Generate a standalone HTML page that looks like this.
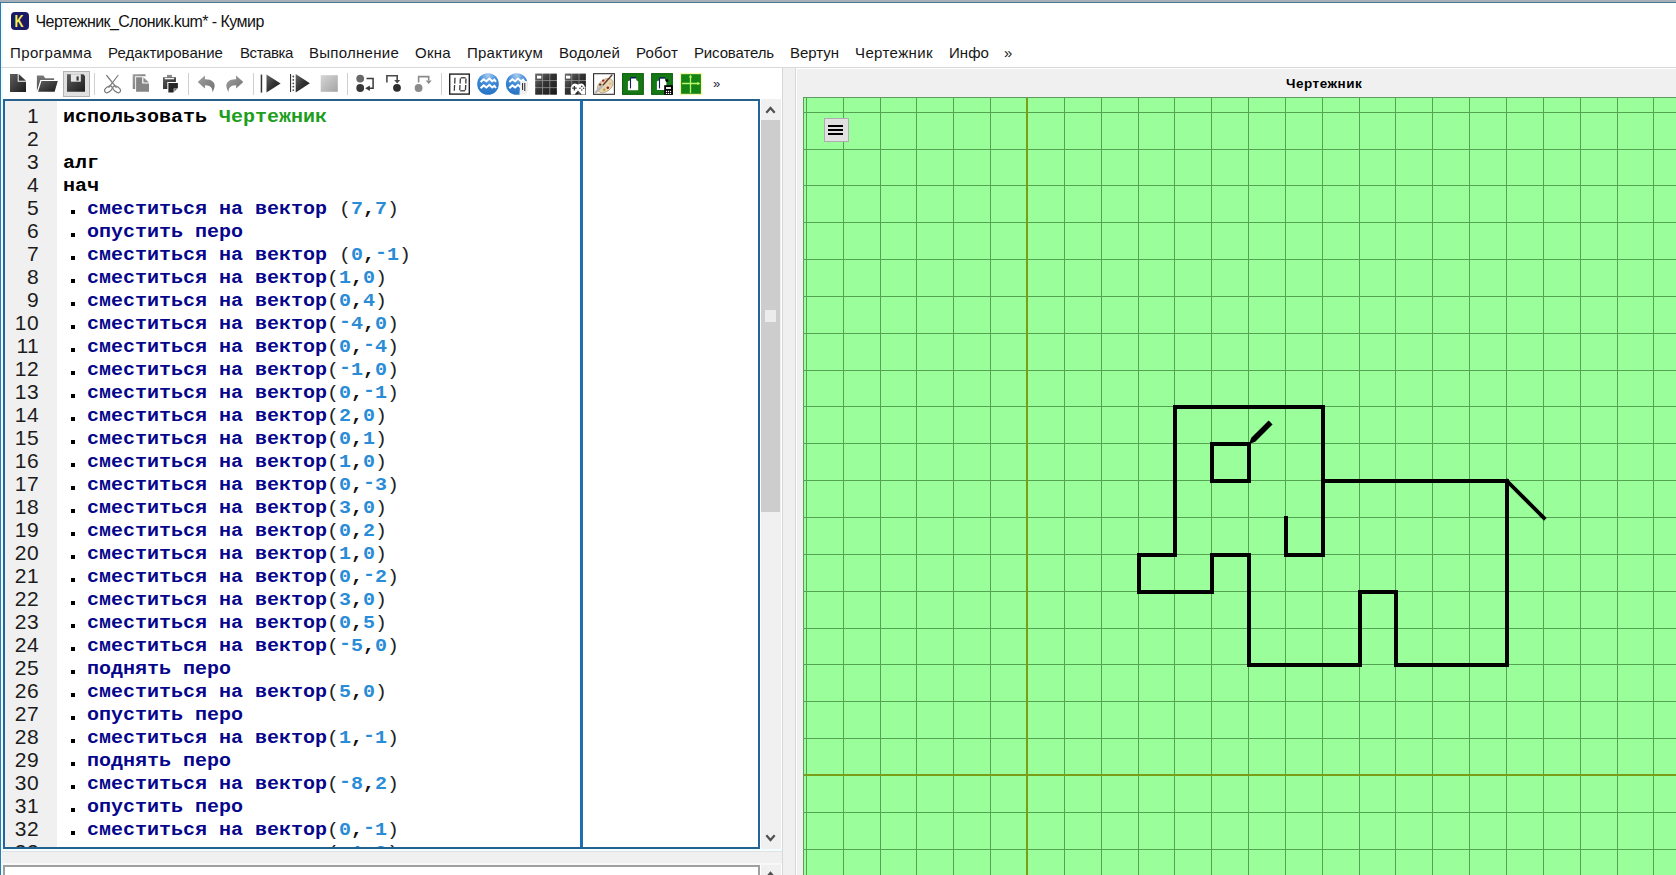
<!DOCTYPE html>
<html lang="ru">
<head>
<meta charset="utf-8">
<title>Чертежник_Слоник.kum* - Кумир</title>
<style>
*{box-sizing:border-box;margin:0;padding:0}
html,body{width:1676px;height:875px;overflow:hidden;background:#fff}
body{position:relative;font-family:"Liberation Sans",sans-serif;color:#000}
.abs{position:absolute}
#topedge{left:0;top:0;width:1676px;height:3px;background:#a6b0b8;border-bottom:1px solid #4f7790}
#leftedge{left:0;top:2px;width:1.4px;height:873px;background:#3278aa}
#leftedge2{left:1px;top:3px;width:2px;height:872px;background:#e9fcff}
#title{left:35.5px;top:13.2px;font-size:16px;letter-spacing:-0.55px;line-height:18px;white-space:nowrap;color:#111}
#appicon{left:11px;top:12px;width:18px;height:18px;background:#1a1a66;border-radius:4px;color:#f6ef52;font-weight:bold;font-size:16.5px;line-height:18px;text-align:center}
#appicon span{display:inline-block;transform:scaleX(0.76);position:relative;top:0.2px;left:-0.8px}
.mi{position:absolute;top:44px;font-size:15px;line-height:18px;white-space:nowrap;color:#161616}
#tbline{left:1px;top:67px;width:1675px;height:1px;background:#d9d9d9}
#rightbg{left:783px;top:68px;width:893px;height:807px;background:#f0f0f0}
#rb_line1{left:796px;top:68px;width:880px;height:1px;background:#fff}
#rb_v{left:795px;top:68px;width:2px;height:807px;background:#fff;border-left:1px solid #d6d6d6}
#paneltitle{left:1286px;top:76px;letter-spacing:0.5px;font-size:13.5px;line-height:16px;font-weight:bold;white-space:nowrap}
#canvas{left:803px;top:97px;width:873px;height:778px;background:#9aff9a;overflow:hidden}
.cv{position:absolute;left:0;top:0}
#cvb_t{left:803px;top:97px;width:873px;height:1px;background:#5f9a5f}
#cvb_l{left:803px;top:97px;width:1px;height:778px;background:#5f9a5f}
#hamb{left:824px;top:118px;width:25px;height:24px;background:#e1e1e1;border:1px solid #adadad}
#hamb i{position:absolute;left:3.4px;width:15px;height:1.7px;background:#000}
/* editor */
#editor{left:3px;top:99px;width:757px;height:750px;border:2px solid #22649c;border-top-color:#28618c;border-bottom-color:#24628f;background:#fff;overflow:hidden}
#gutter{left:5px;top:101px;width:52px;height:746px;background:#f0f0f0}
#margin{left:580px;top:101px;width:3px;height:746px;background:#1c6eb5}
#codeclip{left:5px;top:101px;width:753px;height:746px;overflow:hidden}
.ln{position:absolute;left:0;width:34px;text-align:right;font-size:21px;letter-spacing:0.4px;line-height:23px;height:23px;margin-top:-2.5px;color:#1c1c1c;white-space:nowrap}
.cl{position:absolute;left:58px;font-family:"Liberation Mono",monospace;font-size:19px;line-height:23px;height:23px;white-space:pre;font-weight:bold;transform:scaleX(1.05263);transform-origin:0 0}
.k{color:#000}
.m{color:#1d9e1d}
.c{color:#06068c}
.n{color:#2a8cd6}
.p{color:#222;font-weight:normal}
.q{color:#111}
.mn{position:relative;top:-2.2px}
.dot{position:absolute;left:66px;width:4px;height:4px;background:#000}
/* scrollbar */
#sb{left:761px;top:99px;width:20px;height:750px;background:#f0f0f0}
#sbthumb{left:761px;top:120px;width:19px;height:392px;background:#cdcdcd}
#sbmark{left:765px;top:310px;width:11px;height:12px;background:#ececec}
#sbr{left:782px;top:68px;width:1px;height:807px;background:#d8d8d8}
#below{left:2px;top:851px;width:780px;height:12px;background:#f0f0f0;border-top:1px solid #e2e2e2}
#bottomw{left:3px;top:865px;width:757px;height:12px;border:2px solid #a0a0a0;background:#fff}
#sb2{left:761px;top:865px;width:20px;height:10px;background:#f0f0f0}
.sep{position:absolute;top:73px;width:1px;height:22px;background:#cfcfcf}
</style>
</head>
<body>
<div class="abs" id="topedge"></div>
<div class="abs" id="leftedge"></div>
<div class="abs" id="leftedge2"></div>
<div class="abs" id="appicon"><span>K</span></div>
<div class="abs" id="title">Чертежник_Слоник.kum* - Кумир</div>
<div class="mi" id="m0" style="left:10px;letter-spacing:0.378px">Программа</div>
<div class="mi" id="m1" style="left:108px;letter-spacing:0.052px">Редактирование</div>
<div class="mi" id="m2" style="left:240px;letter-spacing:-0.395px">Вставка</div>
<div class="mi" id="m3" style="left:309px;letter-spacing:0.269px">Выполнение</div>
<div class="mi" id="m4" style="left:415px;letter-spacing:0.285px">Окна</div>
<div class="mi" id="m5" style="left:467px;letter-spacing:0.241px">Практикум</div>
<div class="mi" id="m6" style="left:559px;letter-spacing:0.105px">Водолей</div>
<div class="mi" id="m7" style="left:636px;letter-spacing:0.166px">Робот</div>
<div class="mi" id="m8" style="left:694px;letter-spacing:-0.133px">Рисователь</div>
<div class="mi" id="m9" style="left:790px;letter-spacing:-0.031px">Вертун</div>
<div class="mi" id="m10" style="left:855px;letter-spacing:0.389px">Чертежник</div>
<div class="mi" id="m11" style="left:949px;letter-spacing:0.062px">Инфо</div>
<div class="mi" id="m12" style="left:1004px;letter-spacing:0.656px">»</div>
<div class="abs" id="tbline"></div>
<div class="abs" style="left:63px;top:71px;width:27px;height:26px;background:#e0e0e0;border:1px solid #b4b4b4"></div>
<div class="sep" style="left:94px"></div><div class="sep" style="left:188px"></div><div class="sep" style="left:253px"></div><div class="sep" style="left:347px"></div><div class="sep" style="left:441px"></div>
<svg class="abs" style="left:0;top:68px" width="782" height="31" viewBox="0 68 782 31">
<defs>
<linearGradient id="gd" x1="0" y1="0" x2="1" y2="1"><stop offset="0" stop-color="#5e5e5e"/><stop offset="1" stop-color="#1c1c1c"/></linearGradient>
<linearGradient id="gm" x1="0" y1="0" x2="1" y2="1"><stop offset="0" stop-color="#a0a0a0"/><stop offset="1" stop-color="#707070"/></linearGradient>
<linearGradient id="gl" x1="0" y1="0" x2="1" y2="1"><stop offset="0" stop-color="#d6d6d6"/><stop offset="1" stop-color="#a4a4a4"/></linearGradient>
<linearGradient id="gv" x1="0" y1="0" x2="0" y2="1"><stop offset="0" stop-color="#7a7a7a"/><stop offset="1" stop-color="#484848"/></linearGradient>
<radialGradient id="gb" cx="0.5" cy="0.1" r="0.9"><stop offset="0" stop-color="#a9cdf2"/><stop offset="0.45" stop-color="#3f8ad8"/><stop offset="1" stop-color="#2673c4"/></radialGradient>
<linearGradient id="gc" x1="0" y1="0" x2="1" y2="1"><stop offset="0" stop-color="#6a6a6a"/><stop offset="0.5" stop-color="#333"/><stop offset="1" stop-color="#1e1e1e"/></linearGradient>
<linearGradient id="gr1" gradientUnits="userSpaceOnUse" x1="535" y1="73" x2="557" y2="95"><stop offset="0" stop-color="#707070"/><stop offset="0.45" stop-color="#333"/><stop offset="1" stop-color="#161616"/></linearGradient>
<linearGradient id="gr2" gradientUnits="userSpaceOnUse" x1="565" y1="73" x2="586" y2="95"><stop offset="0" stop-color="#707070"/><stop offset="0.45" stop-color="#333"/><stop offset="1" stop-color="#161616"/></linearGradient>
</defs>
<!-- new -->
<path d="M10 74 H17.7 V81.7 H26 V92 H10 Z" fill="url(#gd)"/>
<path d="M18.7 74 L26 80.7 H18.7 Z" fill="#3c3c3c"/>
<!-- open -->
<path d="M36.9 75.4 H43.4 L45.2 78.3 H54.1 V80 H40.4 L36.9 90.9 Z" fill="url(#gv)"/>
<path d="M41.4 81 H57.8 L54.6 91.7 H38.1 Z" fill="url(#gd)"/>
<!-- save -->
<path d="M67 74.2 H83.3 L85 76 V91.8 H67 Z" fill="url(#gd)"/>
<rect x="70.9" y="74.2" width="9.9" height="7.5" fill="#e6e6e6"/>
<rect x="76.5" y="76.4" width="2.2" height="4.2" fill="#3a3a3a"/>
<!-- cut -->
<g fill="none" stroke="#7a7a7a" stroke-width="1.2" stroke-linecap="round">
<path d="M106.7 75.5 L116.2 87.3"/><path d="M118 75.5 L108.8 87.3"/>
<ellipse cx="108.4" cy="89.3" rx="4.3" ry="2.5" transform="rotate(-38 108.4 89.3)"/>
<ellipse cx="116.7" cy="89.3" rx="4.3" ry="2.5" transform="rotate(38 116.7 89.3)"/>
</g>
<!-- copy -->
<path d="M132.7 74.2 H145.5 V76.3 H135.2 V88.9 H132.7 Z" fill="url(#gm)"/>
<path d="M136.1 77.2 H142.2 V83.6 H149 V91.8 H136.1 Z" fill="#858585"/>
<path d="M143.4 77.2 L149 82.5 H143.4 Z" fill="#8e8e8e"/>
<!-- paste -->
<rect x="167" y="74.9" width="5" height="2.6" fill="#8a8a8a"/>
<path d="M163 77.2 H175.9 V82 H167.3 V88.9 H163 Z" fill="url(#gd)"/>
<rect x="164.7" y="77.9" width="9.5" height="1.4" fill="#f4f4f4"/>
<path d="M168.4 82.9 H177.9 V88 L173.2 92.6 H168.4 Z" fill="#262626"/>
<path d="M173.6 92.3 V88.4 H177.6 Z" fill="#dcdcdc"/>
<path d="M174.5 91 V89.2 H176.4 Z" fill="#333"/>
<!-- undo -->
<path d="M197.7 82 L204.9 75.4 V79.3 C211.5 79 215.3 82.6 214.6 86.4 C214.3 88.6 213.3 90.6 212.5 92.2 C212.6 88 210.6 85 204.9 85.2 V88.6 Z" fill="url(#gm)"/>
<!-- redo -->
<path d="M243.3 82 L236.1 75.4 V79.3 C229.5 79 225.7 82.6 226.4 86.4 C226.7 88.6 227.7 90.6 228.5 92.2 C228.4 88 230.4 85 236.1 85.2 V88.6 Z" fill="url(#gm)"/>
<!-- run -->
<rect x="260.7" y="74.6" width="1.5" height="18" fill="#333"/>
<path d="M266.5 74.6 L280.6 83.6 L266.5 92.6 Z" fill="url(#gc)"/>
<!-- step run -->
<rect x="290" y="74" width="1.1" height="18" fill="#333"/>
<g fill="#444"><circle cx="293.3" cy="76.5" r="0.9"/><circle cx="293.3" cy="79.9" r="0.9"/><circle cx="293.3" cy="83.3" r="0.9"/><circle cx="293.3" cy="86.7" r="0.9"/><circle cx="293.3" cy="90.1" r="0.9"/></g>
<path d="M295.7 74 L309.9 83.3 L295.7 92.4 Z" fill="url(#gc)"/>
<!-- stop -->
<rect x="320.7" y="75.2" width="17.1" height="16.6" fill="url(#gl)"/>
<!-- step over -->
<circle cx="360.2" cy="78.6" r="3.9" fill="#696969"/><circle cx="360.2" cy="88" r="3.9" fill="#383838"/>
<path d="M366.5 78.6 H373.1 V88.3 H369" fill="none" stroke="#3a3a3a" stroke-width="1.5"/>
<path d="M365.2 88.3 L369.9 85.6 V91 Z" fill="#3a3a3a"/>
<!-- step in -->
<path d="M386.9 82.6 V75.7 H397.2 V80.2" fill="none" stroke="#4a4a4a" stroke-width="1.6"/>
<path d="M394.2 80 H400.2 L397.2 83.4 Z" fill="#4a4a4a"/>
<circle cx="397" cy="87.8" r="3.9" fill="#2e2e2e"/>
<!-- step out -->
<path d="M418.6 82.6 V76.6 H428.7 V80.6" fill="none" stroke="#8a8a8a" stroke-width="1.6"/>
<path d="M425.7 80.4 H431.7 L428.7 83.9 Z" fill="#8a8a8a"/>
<circle cx="418.6" cy="88" r="3.9" fill="#8a8a8a"/>
<!-- 10 -->
<rect x="449.7" y="74.1" width="19.6" height="20" fill="#fff" stroke="#222" stroke-width="1.4"/>
<g fill="none" stroke="#3a3a3a" stroke-width="1.3">
<path d="M455 77.8 L454.7 83.6"/><path d="M454.6 85 L454.3 90.8"/>
<path d="M460.8 77.8 H465.6"/><path d="M460.4 78.4 L460.1 83.6"/><path d="M466 78.4 L465.8 83.6"/><path d="M460 85 L459.7 90.2"/><path d="M465.7 85 L465.4 90.2"/><path d="M460.2 90.8 H465"/>
</g>
<!-- aquarius 1 -->
<circle cx="488" cy="84" r="10.8" fill="url(#gb)"/>
<g fill="none" stroke="#fff" stroke-width="2" stroke-linejoin="miter">
<path d="M480.6 82 L483.6 79.2 L486.4 81.2 L489.4 78.6 L492.2 81.2 L494.4 79.6 L496 81.8"/>
<path d="M480.6 88.2 L483.6 85.4 L486.4 87.4 L489.4 84.8 L492.2 87.4 L494.4 85.8 L496 88"/>
</g>
<!-- aquarius 2 -->
<circle cx="516.7" cy="84" r="10.8" fill="url(#gb)"/>
<g fill="none" stroke="#fff" stroke-width="2" stroke-linejoin="miter">
<path d="M509.3 82 L512.3 79.2 L515.1 81.2 L518.1 78.6 L520.9 81.2 L523.1 79.6 L524.7 81.8"/>
<path d="M509.3 88.2 L512.3 85.4 L515.1 87.4 L518.1 84.8 L520.9 87.4"/>
</g>
<path d="M520.4 81 H527.8 V90 L526 94.6 H519.4 Z" fill="#f1f1f1"/>
<path d="M522.6 83 V90 M524.8 83 V91" stroke="#222" stroke-width="1" fill="none"/>
<!-- robot grid -->
<rect x="535.3" y="73.7" width="21.5" height="20.9" fill="#909090"/>
<g fill="url(#gr1)">
<rect x="535.3" y="73.7" width="6.7" height="6.4"/><rect x="542.8" y="73.7" width="6.6" height="6.4"/><rect x="550.2" y="73.7" width="6.6" height="6.4"/>
<rect x="535.3" y="80.9" width="6.7" height="6.4"/><rect x="542.8" y="80.9" width="6.6" height="6.4"/><rect x="550.2" y="80.9" width="6.6" height="6.4"/>
<rect x="535.3" y="88.1" width="6.7" height="6.5"/><rect x="542.8" y="88.1" width="6.6" height="6.5"/><rect x="550.2" y="88.1" width="6.6" height="6.5"/>
</g>
<rect x="537" y="75.7" width="4.3" height="2.9" fill="#fff"/>
<!-- robot pult -->
<rect x="564.9" y="73.7" width="20.9" height="20.9" fill="#909090"/>
<g fill="url(#gr2)">
<rect x="564.9" y="73.7" width="6.5" height="6.4"/><rect x="572.2" y="73.7" width="6.4" height="6.4"/><rect x="579.4" y="73.7" width="6.4" height="6.4"/>
<rect x="564.9" y="80.9" width="6.5" height="6.4"/><rect x="572.2" y="80.9" width="6.4" height="6.4"/><rect x="579.4" y="80.9" width="6.4" height="6.4"/>
<rect x="564.9" y="88.1" width="6.5" height="6.5"/><rect x="572.2" y="88.1" width="6.4" height="6.5"/><rect x="579.4" y="88.1" width="6.4" height="6.5"/>
</g>
<rect x="566" y="75.7" width="4.3" height="2.9" fill="#fff"/>
<path d="M571 94.6 C570 88 571.5 83.6 575 83.6 C576.6 83.6 577 84.6 578 84.6 C579 84.6 579.6 83.6 581.2 83.6 C584.6 83.6 586 88 585.2 94.6 H581.6 L578.1 90.6 L574.6 94.6 Z" fill="#fff"/>
<path d="M574.4 86 V90.4 M572.2 88.2 H576.6" stroke="#333" stroke-width="1.3" fill="none"/>
<g fill="#333"><circle cx="581.8" cy="86.4" r="0.8"/><circle cx="581.8" cy="90" r="0.8"/><circle cx="580" cy="88.2" r="0.8"/><circle cx="583.6" cy="88.2" r="0.8"/></g>
<!-- painter -->
<rect x="593.6" y="73.7" width="20.8" height="20.6" fill="#fff" stroke="#2a2a2a" stroke-width="1.1"/>
<ellipse cx="605.2" cy="85.6" rx="8.8" ry="5.9" transform="rotate(-38 605.2 85.6)" fill="#ead6b2" stroke="#b39468" stroke-width="0.7"/>
<circle cx="603.2" cy="80.6" r="1.2" fill="#a32121"/><circle cx="600.2" cy="84.6" r="1.2" fill="#4a2a1a"/><circle cx="607.8" cy="87.8" r="1.3" fill="#8a2a1a"/><circle cx="604.2" cy="89.8" r="1.3" fill="#b9a53a"/><circle cx="610.3" cy="83.6" r="1.1" fill="#d9b98a"/>
<path d="M612.2 74.8 L602 86.2" stroke="#5a3a2a" stroke-width="1.4" fill="none"/>
<path d="M602.2 85.8 L596 92.2" stroke="#b8b8b8" stroke-width="2.6" fill="none" stroke-linecap="round"/>
<!-- green 1 -->
<rect x="622.1" y="73.2" width="21.6" height="21.6" fill="#147814"/>
<rect x="622.6" y="73.7" width="20.6" height="20.6" fill="none" stroke="#0f5f0f" stroke-width="1"/>
<path d="M627.9 81.6 C628.6 80.4 630 80.6 630.7 80.2 V77.6 H636.2 V80.2 C637 80.6 638 80.6 638.2 81.8 V90.3 H627.9 Z" fill="#fff"/>
<path d="M630.3 77.7 H636.5" stroke="#141c58" stroke-width="1.6"/><path d="M630.5 78 V88.4" stroke="#141c58" stroke-width="1.1"/>
<!-- green 2 -->
<rect x="651.2" y="73.2" width="21.6" height="21.6" fill="#147814"/>
<rect x="651.7" y="73.7" width="20.6" height="20.6" fill="none" stroke="#0f5f0f" stroke-width="1"/>
<path d="M656.9 81.6 C657.6 80.4 659 80.6 659.7 80.2 V77.8 H665 V80.2 C665.8 80.6 666.4 80.6 666.4 81.8 V90 H656.9 Z" fill="#fff"/>
<path d="M659.3 77.9 H665.3" stroke="#141c58" stroke-width="1.6"/><path d="M659.5 78.2 V88.4" stroke="#141c58" stroke-width="1.1"/>
<circle cx="667" cy="80.6" r="1.5" fill="#0a0a0a"/>
<rect x="664.2" y="85.2" width="8.6" height="9.6" fill="#000"/>
<rect x="666" y="87.1" width="5" height="1.8" fill="#fff"/>
<g fill="#fff"><rect x="665.9" y="90.8" width="1.2" height="1.2"/><rect x="667.9" y="90.8" width="1.2" height="1.2"/><rect x="669.9" y="90.8" width="1.2" height="1.2"/><rect x="665.9" y="92.8" width="1.2" height="1.2"/><rect x="667.9" y="92.8" width="1.2" height="1.2"/><rect x="669.9" y="92.8" width="1.2" height="1.2"/></g>
<!-- chertezhnik -->
<rect x="679.8" y="72.9" width="22.4" height="22.2" fill="#f2f7a6"/>
<rect x="681.1" y="74.2" width="19.8" height="19.6" fill="#148414"/>
<path d="M690.5 75.6 V93.2 M682.1 83.5 H699.4" stroke="#b9f76c" stroke-width="1.3" fill="none"/>
<path d="M690.5 74.8 L692.2 77.4 H688.8 Z M700.1 83.5 L697.4 81.8 V85.2 Z" fill="#b9f76c"/>
</svg>
<div class="abs" id="tbmore" style="left:713px;top:76px;font-size:13px;line-height:16px;color:#1c1c3c;white-space:nowrap">»</div>

<div class="abs" id="rightbg"></div>
<div class="abs" id="rb_line1"></div>
<div class="abs" id="rb_v"></div>
<div class="abs" id="sbr"></div>
<div class="abs" id="paneltitle">Чертежник</div>
<div class="abs" id="canvas">
<svg class="cv" width="873" height="778" viewBox="0 0 873 778">
<g fill="#54a352" shape-rendering="crispEdges"><rect x="3" y="0" width="1" height="778"/><rect x="40" y="0" width="1" height="778"/><rect x="77" y="0" width="1" height="778"/><rect x="113" y="0" width="1" height="778"/><rect x="150" y="0" width="1" height="778"/><rect x="187" y="0" width="1" height="778"/><rect x="261" y="0" width="1" height="778"/><rect x="298" y="0" width="1" height="778"/><rect x="335" y="0" width="1" height="778"/><rect x="371" y="0" width="1" height="778"/><rect x="408" y="0" width="1" height="778"/><rect x="445" y="0" width="1" height="778"/><rect x="482" y="0" width="1" height="778"/><rect x="519" y="0" width="1" height="778"/><rect x="556" y="0" width="1" height="778"/><rect x="592" y="0" width="1" height="778"/><rect x="629" y="0" width="1" height="778"/><rect x="666" y="0" width="1" height="778"/><rect x="703" y="0" width="1" height="778"/><rect x="740" y="0" width="1" height="778"/><rect x="777" y="0" width="1" height="778"/><rect x="814" y="0" width="1" height="778"/><rect x="850" y="0" width="1" height="778"/><rect x="0" y="752" width="873" height="1"/><rect x="0" y="715" width="873" height="1"/><rect x="0" y="641" width="873" height="1"/><rect x="0" y="604" width="873" height="1"/><rect x="0" y="567" width="873" height="1"/><rect x="0" y="531" width="873" height="1"/><rect x="0" y="494" width="873" height="1"/><rect x="0" y="457" width="873" height="1"/><rect x="0" y="420" width="873" height="1"/><rect x="0" y="383" width="873" height="1"/><rect x="0" y="346" width="873" height="1"/><rect x="0" y="309" width="873" height="1"/><rect x="0" y="273" width="873" height="1"/><rect x="0" y="236" width="873" height="1"/><rect x="0" y="199" width="873" height="1"/><rect x="0" y="162" width="873" height="1"/><rect x="0" y="125" width="873" height="1"/><rect x="0" y="88" width="873" height="1"/><rect x="0" y="52" width="873" height="1"/><rect x="0" y="15" width="873" height="1"/></g>
<rect x="223" y="0" width="2" height="778" fill="#799e18" shape-rendering="crispEdges"/>
<rect x="0" y="677" width="873" height="2" fill="#799e18" shape-rendering="crispEdges"/>
<g fill="none" stroke="#000" stroke-width="4" stroke-linecap="square" stroke-linejoin="miter" shape-rendering="crispEdges">
<path d="M483 421 L483 458 L520 458 L520 310 L372 310 L372 458 L336 458 L336 495 L409 495 L409 458 L446 458 L446 568 L557 568 L557 495 L593 495 L593 568 L704 568 L704 384 L520 384"/><path d="M446 347 L446 384 L409 384 L409 347 Z"/></g>
<path d="M704 384 L741 421" fill="none" stroke="#000" stroke-width="3.8" stroke-linecap="square"/>
<path transform="translate(446 347) rotate(-45)" d="M0 0 L6 -2.8 H30.5 V2.8 H6 Z" fill="#000"/>
</svg>
</div>
<div class="abs" id="cvb_t"></div>
<div class="abs" id="cvb_l"></div>
<div class="abs" id="hamb"><i style="top:6.2px"></i><i style="top:10.2px"></i><i style="top:14.2px"></i></div>
<div class="abs" id="editor"></div>
<div class="abs" id="gutter"></div>
<div class="abs" id="codeclip">
<div class="ln" style="top:5.3px">1</div>
<div class="cl" style="top:5.3px"><span class="k">использовать</span> <span class="m">Чертежник</span></div>
<div class="ln" style="top:28.3px">2</div>
<div class="ln" style="top:51.3px">3</div>
<div class="cl" style="top:51.3px"><span class="k">алг</span></div>
<div class="ln" style="top:74.3px">4</div>
<div class="cl" style="top:74.3px"><span class="k">нач</span></div>
<i class="dot" style="top:109px"></i>
<div class="ln" style="top:97.3px">5</div>
<div class="cl" style="top:97.3px">  <span class="c">сместиться на вектор</span> <span class="p">(</span><span class="n">7</span><span class="q">,</span><span class="n">7</span><span class="p">)</span></div>
<i class="dot" style="top:132px"></i>
<div class="ln" style="top:120.3px">6</div>
<div class="cl" style="top:120.3px">  <span class="c">опустить перо</span></div>
<i class="dot" style="top:155px"></i>
<div class="ln" style="top:143.3px">7</div>
<div class="cl" style="top:143.3px">  <span class="c">сместиться на вектор</span> <span class="p">(</span><span class="n">0</span><span class="q">,</span><span class="n"><span class="mn">-</span>1</span><span class="p">)</span></div>
<i class="dot" style="top:178px"></i>
<div class="ln" style="top:166.3px">8</div>
<div class="cl" style="top:166.3px">  <span class="c">сместиться на вектор</span><span class="p">(</span><span class="n">1</span><span class="q">,</span><span class="n">0</span><span class="p">)</span></div>
<i class="dot" style="top:201px"></i>
<div class="ln" style="top:189.3px">9</div>
<div class="cl" style="top:189.3px">  <span class="c">сместиться на вектор</span><span class="p">(</span><span class="n">0</span><span class="q">,</span><span class="n">4</span><span class="p">)</span></div>
<i class="dot" style="top:224px"></i>
<div class="ln" style="top:212.3px">10</div>
<div class="cl" style="top:212.3px">  <span class="c">сместиться на вектор</span><span class="p">(</span><span class="n"><span class="mn">-</span>4</span><span class="q">,</span><span class="n">0</span><span class="p">)</span></div>
<i class="dot" style="top:247px"></i>
<div class="ln" style="top:235.3px">11</div>
<div class="cl" style="top:235.3px">  <span class="c">сместиться на вектор</span><span class="p">(</span><span class="n">0</span><span class="q">,</span><span class="n"><span class="mn">-</span>4</span><span class="p">)</span></div>
<i class="dot" style="top:270px"></i>
<div class="ln" style="top:258.3px">12</div>
<div class="cl" style="top:258.3px">  <span class="c">сместиться на вектор</span><span class="p">(</span><span class="n"><span class="mn">-</span>1</span><span class="q">,</span><span class="n">0</span><span class="p">)</span></div>
<i class="dot" style="top:293px"></i>
<div class="ln" style="top:281.3px">13</div>
<div class="cl" style="top:281.3px">  <span class="c">сместиться на вектор</span><span class="p">(</span><span class="n">0</span><span class="q">,</span><span class="n"><span class="mn">-</span>1</span><span class="p">)</span></div>
<i class="dot" style="top:316px"></i>
<div class="ln" style="top:304.3px">14</div>
<div class="cl" style="top:304.3px">  <span class="c">сместиться на вектор</span><span class="p">(</span><span class="n">2</span><span class="q">,</span><span class="n">0</span><span class="p">)</span></div>
<i class="dot" style="top:339px"></i>
<div class="ln" style="top:327.3px">15</div>
<div class="cl" style="top:327.3px">  <span class="c">сместиться на вектор</span><span class="p">(</span><span class="n">0</span><span class="q">,</span><span class="n">1</span><span class="p">)</span></div>
<i class="dot" style="top:362px"></i>
<div class="ln" style="top:350.3px">16</div>
<div class="cl" style="top:350.3px">  <span class="c">сместиться на вектор</span><span class="p">(</span><span class="n">1</span><span class="q">,</span><span class="n">0</span><span class="p">)</span></div>
<i class="dot" style="top:385px"></i>
<div class="ln" style="top:373.3px">17</div>
<div class="cl" style="top:373.3px">  <span class="c">сместиться на вектор</span><span class="p">(</span><span class="n">0</span><span class="q">,</span><span class="n"><span class="mn">-</span>3</span><span class="p">)</span></div>
<i class="dot" style="top:408px"></i>
<div class="ln" style="top:396.3px">18</div>
<div class="cl" style="top:396.3px">  <span class="c">сместиться на вектор</span><span class="p">(</span><span class="n">3</span><span class="q">,</span><span class="n">0</span><span class="p">)</span></div>
<i class="dot" style="top:431px"></i>
<div class="ln" style="top:419.3px">19</div>
<div class="cl" style="top:419.3px">  <span class="c">сместиться на вектор</span><span class="p">(</span><span class="n">0</span><span class="q">,</span><span class="n">2</span><span class="p">)</span></div>
<i class="dot" style="top:454px"></i>
<div class="ln" style="top:442.3px">20</div>
<div class="cl" style="top:442.3px">  <span class="c">сместиться на вектор</span><span class="p">(</span><span class="n">1</span><span class="q">,</span><span class="n">0</span><span class="p">)</span></div>
<i class="dot" style="top:477px"></i>
<div class="ln" style="top:465.3px">21</div>
<div class="cl" style="top:465.3px">  <span class="c">сместиться на вектор</span><span class="p">(</span><span class="n">0</span><span class="q">,</span><span class="n"><span class="mn">-</span>2</span><span class="p">)</span></div>
<i class="dot" style="top:500px"></i>
<div class="ln" style="top:488.3px">22</div>
<div class="cl" style="top:488.3px">  <span class="c">сместиться на вектор</span><span class="p">(</span><span class="n">3</span><span class="q">,</span><span class="n">0</span><span class="p">)</span></div>
<i class="dot" style="top:523px"></i>
<div class="ln" style="top:511.3px">23</div>
<div class="cl" style="top:511.3px">  <span class="c">сместиться на вектор</span><span class="p">(</span><span class="n">0</span><span class="q">,</span><span class="n">5</span><span class="p">)</span></div>
<i class="dot" style="top:546px"></i>
<div class="ln" style="top:534.3px">24</div>
<div class="cl" style="top:534.3px">  <span class="c">сместиться на вектор</span><span class="p">(</span><span class="n"><span class="mn">-</span>5</span><span class="q">,</span><span class="n">0</span><span class="p">)</span></div>
<i class="dot" style="top:569px"></i>
<div class="ln" style="top:557.3px">25</div>
<div class="cl" style="top:557.3px">  <span class="c">поднять перо</span></div>
<i class="dot" style="top:592px"></i>
<div class="ln" style="top:580.3px">26</div>
<div class="cl" style="top:580.3px">  <span class="c">сместиться на вектор</span><span class="p">(</span><span class="n">5</span><span class="q">,</span><span class="n">0</span><span class="p">)</span></div>
<i class="dot" style="top:615px"></i>
<div class="ln" style="top:603.3px">27</div>
<div class="cl" style="top:603.3px">  <span class="c">опустить перо</span></div>
<i class="dot" style="top:638px"></i>
<div class="ln" style="top:626.3px">28</div>
<div class="cl" style="top:626.3px">  <span class="c">сместиться на вектор</span><span class="p">(</span><span class="n">1</span><span class="q">,</span><span class="n"><span class="mn">-</span>1</span><span class="p">)</span></div>
<i class="dot" style="top:661px"></i>
<div class="ln" style="top:649.3px">29</div>
<div class="cl" style="top:649.3px">  <span class="c">поднять перо</span></div>
<i class="dot" style="top:684px"></i>
<div class="ln" style="top:672.3px">30</div>
<div class="cl" style="top:672.3px">  <span class="c">сместиться на вектор</span><span class="p">(</span><span class="n"><span class="mn">-</span>8</span><span class="q">,</span><span class="n">2</span><span class="p">)</span></div>
<i class="dot" style="top:707px"></i>
<div class="ln" style="top:695.3px">31</div>
<div class="cl" style="top:695.3px">  <span class="c">опустить перо</span></div>
<i class="dot" style="top:730px"></i>
<div class="ln" style="top:718.3px">32</div>
<div class="cl" style="top:718.3px">  <span class="c">сместиться на вектор</span><span class="p">(</span><span class="n">0</span><span class="q">,</span><span class="n"><span class="mn">-</span>1</span><span class="p">)</span></div>
<i class="dot" style="top:753px"></i>
<div class="ln" style="top:741.3px">33</div>
<div class="cl" style="top:741.3px">  <span class="c">сместиться на вектор</span><span class="p">(</span><span class="n"><span class="mn">-</span>1</span><span class="q">,</span><span class="n">0</span><span class="p">)</span></div>
</div>
<div class="abs" id="margin"></div>
<div class="abs" id="sb"></div>
<div class="abs" id="sbthumb"></div>
<div class="abs" id="sbmark"></div>
<div class="abs" style="left:2px;top:849px;width:780px;height:2px;background:#f1fdff"></div>
<div class="abs" style="left:2px;top:863px;width:780px;height:2px;background:#f8f8f8"></div>
<div class="abs" id="below"></div>
<div class="abs" id="bottomw"></div>
<div class="abs" id="sb2"></div>
<svg class="abs" style="left:760px;top:99px" width="22" height="776" viewBox="760 99 22 776"><g fill="none" stroke="#505050" stroke-width="2.2"><path d="M766.3 112.8 L770.5 108 L774.7 112.8"/><path d="M766.3 835.2 L770.5 840 L774.7 835.2"/><path d="M766.3 877.8 L770.5 873 L774.7 877.8"/></g></svg>
</body>
</html>
